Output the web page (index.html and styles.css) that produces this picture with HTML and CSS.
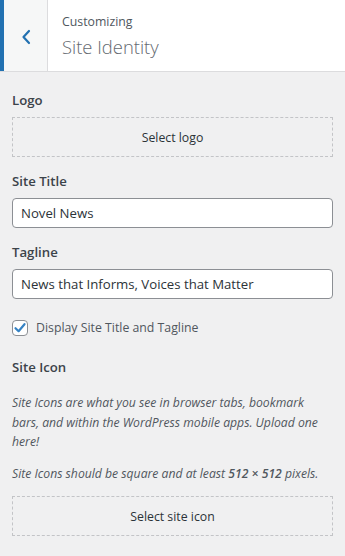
FILE: index.html
```html
<!DOCTYPE html>
<html lang="en">
<head>
    <meta charset="UTF-8">
    <meta name="viewport" content="width=device-width, initial-scale=1.0">
    <link rel="stylesheet" href="styles.css">
</head>
<body>
    <div class="section-header">
        <button class="back-btn" aria-label="Back">
            <svg width="10" height="16" viewBox="0 0 10 16">
                <polyline points="8,2 2.5,8 8,14" fill="none" stroke="#2271b1" stroke-width="2.2" stroke-linecap="round" stroke-linejoin="round"/>
            </svg>
        </button>
        <div class="section-title">
            <span class="action">Customizing</span>
            <h3>Site Identity</h3>
        </div>
    </div>

    <div class="controls">
        <div class="control">
            <span class="control-title">Logo</span>
            <button class="upload-btn">Select logo</button>
        </div>

        <div class="control">
            <span class="control-title">Site Title</span>
            <input type="text" value="Novel News">
        </div>

        <div class="control">
            <span class="control-title">Tagline</span>
            <input type="text" value="News that Informs, Voices that Matter">
        </div>

        <label class="control checkbox-row">
            <span class="checkbox">
                <svg width="14" height="14" viewBox="0 0 14 14">
                    <polyline points="2.5,7.2 5.6,10.2 11.5,3.2" fill="none" stroke="#3582c4" stroke-width="2.2" stroke-linecap="round" stroke-linejoin="round"/>
                </svg>
            </span>
            Display Site Title and Tagline
        </label>

        <div class="control icon-control">
            <span class="control-title">Site Icon</span>
            <p class="description">Site Icons are what you see in browser tabs, bookmark bars, and within the WordPress mobile apps. Upload one here!</p>
            <p class="description">Site Icons should be square and at least <strong>512 &times; 512</strong> pixels.</p>
            <button class="upload-btn">Select site icon</button>
        </div>
    </div>
</body>
</html>
```

FILE: styles.css
```css
:root {
    --bg: #f0f0f1;
    --blue: #2271b1;
    --text: #3c434a;
    --muted: #50575e;
    --border: #8c8f94;
    --dash: #c3c4c7;
}

* {
    margin: 0;
    padding: 0;
    box-sizing: border-box;
}

/* Open Sans runs wider than the original UI font, so sizes are trimmed a bit */
body {
    background: var(--bg);
    color: var(--text);
    font-family: "Open Sans", "Noto Sans", sans-serif;
    font-size: 12.3px;
    width: 345px;
    height: 556px;
    overflow: hidden;
}

/* Header */
.section-header {
    display: flex;
    height: 72px;
    background: #fff;
    border-bottom: 1px solid #dcdcde;
}

.back-btn {
    width: 48px;
    border: none;
    border-left: 4px solid var(--blue);
    border-right: 1px solid #dcdcde;
    background: #f6f7f7;
    display: flex;
    align-items: center;
    justify-content: center;
    padding-top: 2px;
}

.section-title {
    display: flex;
    flex-direction: column;
    padding: 10px 14px 0 14px;
}

.action {
    font-size: 12.3px;
    line-height: 24px;
    color: var(--muted);
}

.section-title h3 {
    font-size: 18.4px;
    font-weight: 300;
    line-height: 26px;
    color: #646970;
}

/* Controls */
.controls {
    display: flex;
    flex-direction: column;
    padding: 18px 12px 0;
}

.control {
    display: flex;
    flex-direction: column;
    margin-bottom: 14px;
}

.control-title {
    font-size: 13.2px;
    font-weight: 600;
    line-height: 20px;
    margin-bottom: 7px;
}

.upload-btn {
    height: 40px;
    width: 100%;
    background: transparent;
    border: 1px dashed var(--dash);
    font-family: inherit;
    font-size: 12.3px;
    color: #2c3338;
}

input[type="text"] {
    height: 30px;
    width: 100%;
    padding: 0 8px;
    border: 1px solid var(--border);
    border-radius: 4px;
    background: #fff;
    font-family: inherit;
    font-size: 13.2px;
    color: #2c3338;
}

.checkbox-row {
    flex-direction: row;
    align-items: center;
    gap: 8px;
    margin-top: 6px;
    margin-bottom: 21px;
    color: var(--muted);
}

.checkbox {
    width: 16px;
    height: 16px;
    border: 1px solid var(--border);
    border-radius: 4px;
    background: #fff;
    display: flex;
    align-items: center;
    justify-content: center;
}

.icon-control .control-title {
    margin-bottom: 16px;
}

.description {
    font-style: italic;
    font-size: 12.2px;
    line-height: 19.5px;
    color: var(--muted);
    margin-bottom: 12px;
}

.description strong {
    font-weight: 600;
}

.description + .description {
    margin-bottom: 13px;
}
```
